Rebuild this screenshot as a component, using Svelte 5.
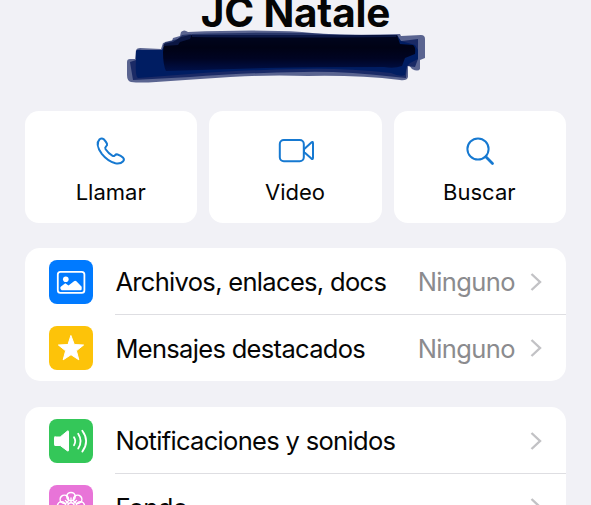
<script>
    let actions = [
        { icon: "phone", label: "Llamar" },
        { icon: "video", label: "Video" },
        { icon: "search", label: "Buscar" },
    ];

    let groups = [
        [
            { icon: "image", color: "#007aff", label: "Archivos, enlaces, docs", value: "Ninguno" },
            { icon: "star", color: "#fdc309", label: "Mensajes destacados", value: "Ninguno" },
        ],
        [
            { icon: "sound", color: "#34c759", label: "Notificaciones y sonidos" },
            { icon: "flower", color: "#e874d8", label: "Fondo" },
        ],
    ];

    let petals = [0, 45, 90, 135, 180, 225, 270, 315];
</script>

<main>
    <header>
        <h1>JC Natale</h1>
        <svg class="scribble" viewBox="0 0 310 58" width="310" height="58">
            <defs>
                <linearGradient id="ink" x1="0" y1="0" x2="0" y2="1">
                    <stop offset="0" stop-color="#00051f" />
                    <stop offset="0.35" stop-color="#000215" />
                    <stop offset="0.65" stop-color="#000422" />
                    <stop offset="1" stop-color="#001048" />
                </linearGradient>
            </defs>
            <path fill="#5a6490" d="M9 35Q9 32 12 32L17 32L18 23Q19 21 22 21L43 22L45 16L54 14L55 11L62 9L63 5Q66 2 70 5Q140 2 184 5Q220 9 282 7L283 9L303 8Q307 8 307 12V31L302 33L302 42Q300 45 294 42L290 37L290 50Q289 54 282 53Q240 48 190 49Q142 47 82 52L38 55Q22 56 13 55Q9 54 9 48Z" />
            <path fill="#1a2a66" d="M12 35L18 33L18 24L284 14L300 12V32L297 40L289 39L288 51L278 50Q225 44 185 45Q120 46 72 50L15 53Z" />
            <path fill="#001d62" d="M18 33V24Q19 22 24 23L44 23L47 17L55 15L63 11L72 8L279 8L283 14L297 18L300 23L300 32L292 36L289 39L287 48Q282 50 273 46Q225 41 185 42Q120 43 72 47L20 51Q17 50 18 33Z" />
            <path fill="url(#ink)" d="M45 25L46 17L55 15L63 10L72 8L279 8L282 17L295 18Q298 20 297 27L287 31L284 39Q276 42 266 40Q205 40 148 41L48 44Q45 38 45 25Z" />
            <path fill="#101f55" d="M45 19L47 15L60 12L64 8L74 7L72 12L62 15L60 18ZM74 7Q150 5 190 6Q230 9 279 8L278 10Q160 11 74 10Z" opacity=".7" />
        </svg>
    </header>

    <section class="actions">
        {#each actions as action}
            <button>
                <svg width="40" height="32" viewBox="0 0 40 32" fill="none" stroke="#1679d1" stroke-width="2" stroke-linecap="round" stroke-linejoin="round">
                    {#if action.icon == "phone"}
                        <path d="M8.6 4.2Q10.8 2.6 12.8 4.3Q14.8 6.4 16 8.8Q16.5 10.2 15 11.5Q13.7 12.6 14.6 14.2Q17.4 18.4 21.6 20.8Q22.8 21.3 23.8 20.4Q25 19 26.6 19.5Q30 20.6 32.2 22.8Q33.6 24.4 32.2 26.2Q29.4 29.2 24.4 28.2Q16.5 26 10.8 18.8Q3.8 9.2 8.6 4.2Z" />
                    {:else if action.icon == "video"}
                        <rect x="4.8" y="5" width="24" height="21.3" rx="4" />
                        <path d="M29 14.2L36.4 7.4Q38 6.2 38 8.2V22.8Q38 24.8 36.4 23.6L29 17Z" />
                    {:else}
                        <circle cx="18" cy="14" r="10.6" />
                        <path stroke-width="2.8" d="M25.8 21.8L32.5 28.5" />
                    {/if}
                </svg>
                <span>{action.label}</span>
            </button>
        {/each}
    </section>

    {#each groups as rows}
        <ul>
            {#each rows as row}
                <li>
                    <div class="icon" style="background: {row.color}">
                        <svg width="44" height="44" viewBox="0 0 44 44" fill="none" stroke="#fff" stroke-linecap="round" stroke-linejoin="round">
                            {#if row.icon == "image"}
                                <rect x="8.8" y="11.8" width="26.6" height="21" rx="2.6" stroke-width="1.8" />
                                <circle cx="16.8" cy="19.3" r="2.8" fill="#fff" stroke="none" />
                                <path fill="#fff" stroke="none" d="M11.5 29Q10.9 27.4 12 26.5L16.3 23.2L19.5 25.4L25 21.2Q26.2 20.2 27.4 21.3L32.7 26.7V29Q32.7 30.2 31.5 30.2H12.7Z" />
                            {:else if row.icon == "star"}
                                <path fill="#fff" stroke-width="1" d="M22 9.8L25.3 18.5L34.6 19L27.4 24.8L29.8 33.8L22 28.7L14.2 33.8L16.6 24.8L9.4 19L18.7 18.5Z" />
                            {:else if row.icon == "sound"}
                                <path fill="#fff" stroke-width="1" d="M6 18H11.2L18.5 12Q19.5 11.4 19.5 12.8V31.2Q19.5 32.5 18.5 31.9L11.2 26.5H6Q5.5 26.5 5.5 25.8V18.6Q5.5 18 6 18Z" />
                                <path stroke-width="1.8" d="M25 18.2Q27.5 22.2 25 26.2M29.2 14.8Q34 22.2 29.2 29.6M33.3 11.8Q41 22.2 33.3 32.6" />
                            {:else}
                                {#each petals as angle}
                                    <circle cx="22" cy="11.6" r="4.2" stroke-width="1.5" transform="rotate({angle} 22 21)" />
                                    <path stroke-width="1.3" d="M22 17V13" transform="rotate({angle} 22 21)" />
                                {/each}
                                <circle cx="22" cy="21" r="3.2" stroke-width="1.4" />
                            {/if}
                        </svg>
                    </div>
                    <div class="content">
                        <span class="label">{row.label}</span>
                        {#if row.value}
                            <span class="value">{row.value}</span>
                        {/if}
                        <svg class="chevron" width="14" height="22" viewBox="0 0 14 22">
                            <path d="M2.5 3L11 11L2.5 19" fill="none" stroke="#c2c2c5" stroke-width="2.4" />
                        </svg>
                    </div>
                </li>
            {/each}
        </ul>
    {/each}
</main>

<style>
    :global(body) {
        margin: 0;
        background: #f1f1f6;
        overflow: hidden;
    }
    main {
        box-sizing: border-box;
        height: 505px;
        padding: 0 25px;
        overflow: hidden;
        background: #f1f1f6;
        font-family: Inter, sans-serif;
        color: #050505;
    }
    header {
        display: flex;
        flex-direction: column;
        align-items: center;
        height: 111px;
    }
    h1 {
        flex: none;
        margin: -10px 0 0;
        height: 37px;
        line-height: 45px;
        font-size: 40.5px;
        font-weight: 700;
        letter-spacing: -0.2px;
        white-space: nowrap;
    }
    .scribble {
        flex: none;
        margin-right: 45px;
        filter: blur(0.7px);
    }
    .actions {
        display: grid;
        grid-template-columns: repeat(3, 1fr);
        gap: 12px;
        height: 112px;
        margin-bottom: 25px;
    }
    button {
        display: flex;
        flex-direction: column;
        align-items: center;
        padding: 24px 0 0;
        border: 0;
        border-radius: 14px;
        background: #fff;
        color: inherit;
        font-family: inherit;
        font-size: 22px;
        line-height: 28px;
    }
    button span {
        margin-top: 11px;
        padding-right: 1px;
    }
    ul {
        margin: 0 0 26px;
        padding: 0;
        list-style: none;
        border-radius: 15px;
        background: #fff;
    }
    li {
        display: flex;
        align-items: center;
        height: 66.5px;
        padding-left: 24px;
    }
    .icon {
        flex: none;
        width: 44px;
        height: 44px;
        margin-top: 0.8px;
        border-radius: 8px;
        overflow: hidden;
    }
    .icon svg {
        display: block;
    }
    .content {
        box-sizing: border-box;
        display: flex;
        flex: 1;
        align-items: center;
        height: 100%;
        margin-left: 22px;
        padding: 2px 23px 0 0.4px;
        border-bottom: 1px solid #dedee2;
        font-size: 25.5px;
        letter-spacing: -0.68px;
        white-space: nowrap;
    }
    li:last-child .content {
        border-bottom-color: transparent;
    }
    .label {
        flex: 1;
    }
    .value {
        color: #8b8b8e;
        letter-spacing: -0.6px;
    }
    .chevron {
        margin-left: 14px;
    }
</style>
